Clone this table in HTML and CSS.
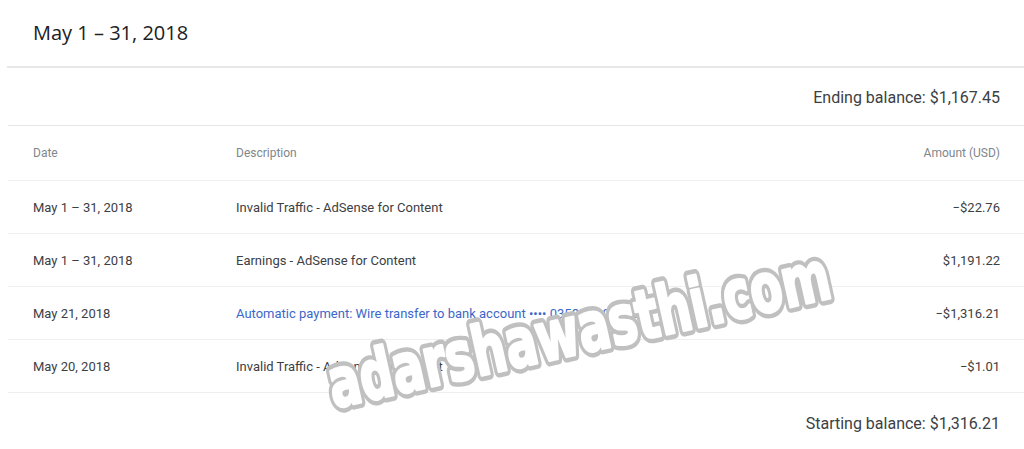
FILE: index.html
```html
<!DOCTYPE html>
<html lang="en">
<head>
<meta charset="utf-8">
<title>Transactions</title>
<link rel="stylesheet" href="styles.css">
</head>
<body>
<div class="page">
  <header class="title">May 1 – 31, 2018</header>
  <div class="top-divider"></div>
  <div class="balance ending">Ending balance: $1,167.45</div>
  <div class="table">
    <div class="row head">
      <div class="c-date">Date</div>
      <div class="c-desc">Description</div>
      <div class="c-amt">Amount (USD)</div>
    </div>
    <div class="row">
      <div class="c-date">May 1 – 31, 2018</div>
      <div class="c-desc">Invalid Traffic - AdSense for Content</div>
      <div class="c-amt">−$22.76</div>
    </div>
    <div class="row">
      <div class="c-date">May 1 – 31, 2018</div>
      <div class="c-desc">Earnings - AdSense for Content</div>
      <div class="c-amt">$1,191.22</div>
    </div>
    <div class="row">
      <div class="c-date">May 21, 2018</div>
      <div class="c-desc"><a class="link" href="#">Automatic payment: Wire transfer to bank account •••• 0358G310IE0.8</a></div>
      <div class="c-amt">−$1,316.21</div>
    </div>
    <div class="row">
      <div class="c-date">May 20, 2018</div>
      <div class="c-desc">Invalid Traffic - AdSense for Content</div>
      <div class="c-amt">−$1.01</div>
    </div>
  </div>
  <div class="balance starting">Starting balance: $1,316.21</div>

  <svg class="watermark" width="1024" height="449" viewBox="0 0 1024 449">
    <g transform="rotate(-12.5 334 408)">
      <text class="wm-outline" x="334" y="408" textLength="512" lengthAdjust="spacingAndGlyphs">adarshawasthi.com</text>
      <text class="wm-fill" x="334" y="408" textLength="512" lengthAdjust="spacingAndGlyphs">adarshawasthi.com</text>
    </g>
  </svg>
</div>
</body>
</html>
```

FILE: styles.css
```css
html, body {
  margin: 0;
  padding: 0;
  background: #ffffff;
}

body {
  font-family: Roboto, "Liberation Sans", Arial, sans-serif;
  color: #3c4043;
  width: 1024px;
  height: 449px;
  overflow: hidden;
}

.page {
  position: relative;
  width: 1024px;
  height: 449px;
}

.title {
  height: 66px;
  box-sizing: border-box;
  padding: 19px 0 0 33px;
  font-family: "Open Sans", Roboto, sans-serif;
  font-size: 20px;
  font-weight: 500;
  color: #202124;
  line-height: 27px;
}

.top-divider {
  margin-left: 7px;
  height: 2px;
  background: #e8e8e8;
}

.balance {
  display: flex;
  justify-content: flex-end;
  align-items: center;
  padding-right: 24px;
  font-size: 16px;
  color: #3c4043;
  margin-left: 8px;
}

.ending {
  height: 55px;
  padding-top: 2px;
  border-bottom: 1px solid #e6e6e6;
}

.starting {
  height: 56px;
  padding-top: 2px;
}

.table {
  margin-left: 8px;
}

.row {
  display: flex;
  align-items: center;
  height: 52px;
  border-bottom: 1px solid #efefef;
  font-size: 13px;
  color: #3c4043;
}

.row.head {
  height: 54px;
  font-size: 12px;
  color: #80868b;
}

.c-date {
  width: 203px;
  padding-left: 25px;
  flex: none;
}

.c-desc {
  flex: 1;
  white-space: nowrap;
}

.c-amt {
  padding-right: 24px;
  text-align: right;
}

.link {
  color: #3b67c9;
  text-decoration: none;
}

.watermark {
  position: absolute;
  left: 0;
  top: 0;
  pointer-events: none;
}

.watermark text {
  font-family: "DejaVu Sans", sans-serif;
  font-weight: bold;
  font-size: 68px;
  stroke-linejoin: round;
}

.wm-outline {
  fill: #bdbdbd;
  stroke: #c0c0c0;
  stroke-width: 12px;
}

.wm-fill {
  fill: #ffffff;
  stroke: #ffffff;
  stroke-width: 3px;
}
```
